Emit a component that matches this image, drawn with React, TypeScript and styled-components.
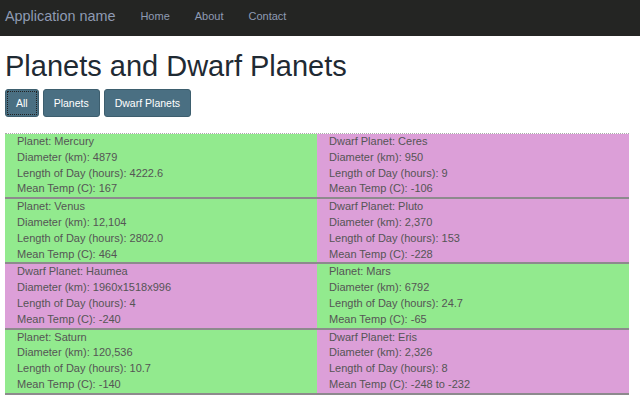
import React from "react";
import styled, { createGlobalStyle } from "styled-components";

const Global = createGlobalStyle`
  html, body { margin: 0; padding: 0; background: #fff; }
  body { font-family: "Liberation Sans", Arial, sans-serif; color: #333; }
`;

const NavBar = styled.nav`
  height: 36px;
  box-sizing: border-box;
  background: #242523;
  display: flex;
  align-items: center;
  padding: 0 5px 4px 5px;
`;

const Brand = styled.a`
  font-size: 14.4px;
  color: #8f9bb3;
  text-decoration: none;
  margin-right: 25px;
  line-height: 1;
`;

const NavLink = styled.a`
  font-size: 11px;
  color: #8f9bb3;
  text-decoration: none;
  margin-right: 25px;
  line-height: 1;
`;

const Container = styled.main`
  padding: 0 11px 0 5px;
`;

const Title = styled.h1`
  font-size: 29px;
  font-weight: 400;
  color: #1f2a33;
  margin: 14px 0 6px 0;
  line-height: 33px;
`;

const ButtonRow = styled.div`
  display: flex;
  gap: 4px;
  margin-bottom: 16px;
`;

const FilterButton = styled.button<{ $active?: boolean }>`
  height: 28px;
  padding: 0 10px;
  font-family: "Liberation Sans", Arial, sans-serif;
  font-size: 10.5px;
  color: #fff;
  background: #4a6f82;
  border: 1px solid #3d5e6e;
  border-radius: 3px;
  outline: ${(p) => (p.$active ? "1px dotted #222" : "none")};
  outline-offset: -3px;
`;

const Grid = styled.div`
  display: grid;
  grid-template-columns: 1fr 1fr;
  border-top: 1px dotted #aaa;
`;

const Card = styled.div<{ $dwarf?: boolean }>`
  background: ${(p) => (p.$dwarf ? "#dc9fd8" : "#92ea8e")};
  border-bottom: 2px solid #8d8a8d;
  padding: 0 12px;
  font-size: 11px;
  line-height: 15.8px;
  color: #555;
`;

const Line = styled.div``;

type Body = {
  dwarf: boolean;
  name: string;
  diameter: string;
  day: string;
  temp: string;
};

const bodies: Body[] = [
  { dwarf: false, name: "Mercury", diameter: "4879", day: "4222.6", temp: "167" },
  { dwarf: true, name: "Ceres", diameter: "950", day: "9", temp: "-106" },
  { dwarf: false, name: "Venus", diameter: "12,104", day: "2802.0", temp: "464" },
  { dwarf: true, name: "Pluto", diameter: "2,370", day: "153", temp: "-228" },
  { dwarf: true, name: "Haumea", diameter: "1960x1518x996", day: "4", temp: "-240" },
  { dwarf: false, name: "Mars", diameter: "6792", day: "24.7", temp: "-65" },
  { dwarf: false, name: "Saturn", diameter: "120,536", day: "10.7", temp: "-140" },
  { dwarf: true, name: "Eris", diameter: "2,326", day: "8", temp: "-248 to -232" },
];

export default function App() {
  return (
    <>
      <Global />
      <NavBar>
        <Brand href="#">Application name</Brand>
        <NavLink href="#">Home</NavLink>
        <NavLink href="#">About</NavLink>
        <NavLink href="#">Contact</NavLink>
      </NavBar>
      <Container>
        <Title>Planets and Dwarf Planets</Title>
        <ButtonRow>
          <FilterButton $active>All</FilterButton>
          <FilterButton>Planets</FilterButton>
          <FilterButton>Dwarf Planets</FilterButton>
        </ButtonRow>
        <Grid>
          {bodies.map((b) => (
            <Card key={b.name} $dwarf={b.dwarf}>
              <Line>{b.dwarf ? "Dwarf Planet" : "Planet"}: {b.name}</Line>
              <Line>Diameter (km): {b.diameter}</Line>
              <Line>Length of Day (hours): {b.day}</Line>
              <Line>Mean Temp (C): {b.temp}</Line>
            </Card>
          ))}
        </Grid>
      </Container>
    </>
  );
}
